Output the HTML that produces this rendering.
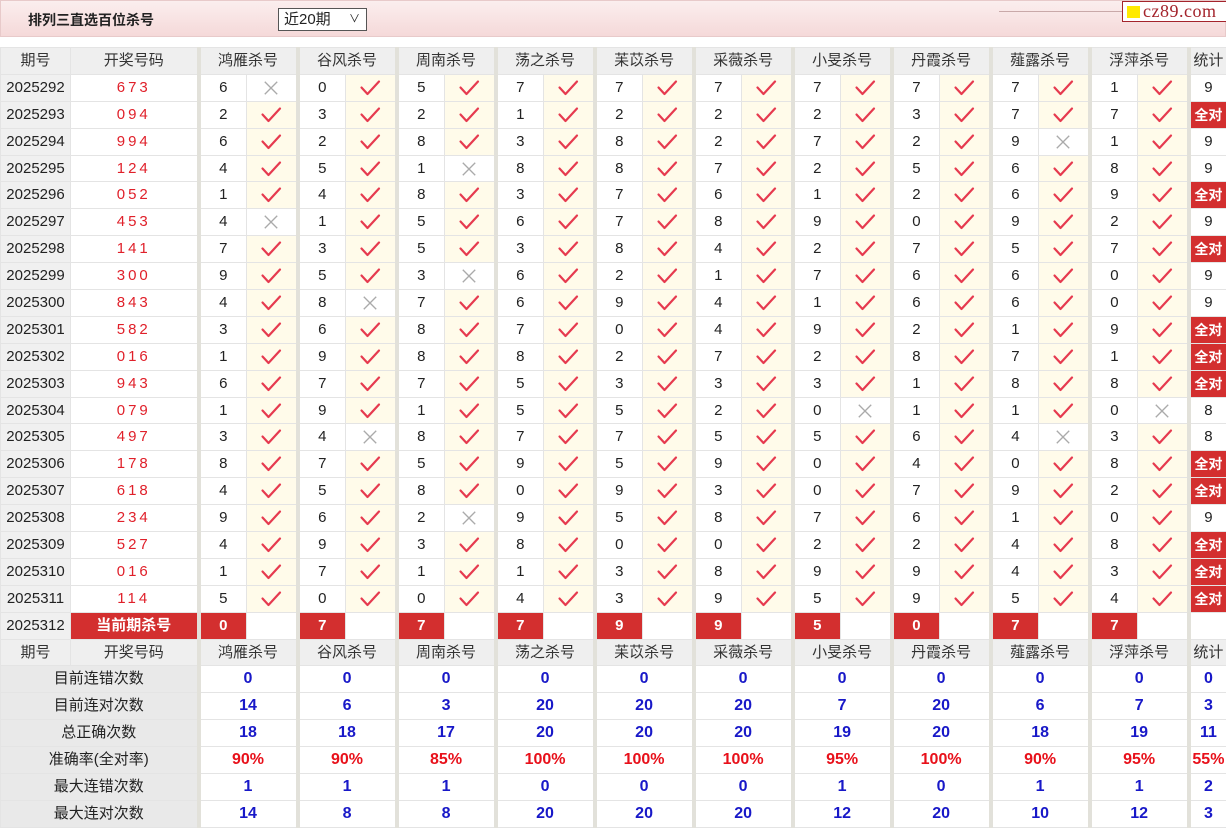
<!DOCTYPE html>
<html><head><meta charset="utf-8">
<style>
*{margin:0;padding:0;box-sizing:border-box}
body{width:1226px;height:828px;background:#fff;font-family:"Liberation Sans","Noto Sans CJK SC",sans-serif;color:#222;position:relative;overflow:hidden}
.top{position:absolute;left:0;top:0;width:1226px;height:37px;background:linear-gradient(#fbeeee,#f5d9d9);border:1px solid #e8caca}
.title{position:absolute;left:27px;top:9px;font-size:14px;font-weight:bold;color:#222}
.sel{position:absolute;left:277px;top:7px;width:89px;height:23px;border:1px solid #555;background:#fff;font-size:15px;padding-left:5px;line-height:21px}
.sel span{position:absolute;right:6px;top:0;font-size:11px}
.line{position:absolute;left:998px;top:10px;width:123px;height:1px;background:#c9a9a9}
.logo{position:absolute;left:1121px;top:0;width:105px;height:21px;border:1px solid #a4242c;background:#fff;font-family:"Liberation Serif",serif;font-size:18px;color:#a4242c;line-height:19px;padding-left:20px;letter-spacing:.5px}
.logo i{position:absolute;left:4px;top:4px;width:13px;height:12px;background:#ffea00}
table{position:absolute;top:47px;left:0;border-collapse:collapse;table-layout:fixed;width:1226px}
td{height:26.9px;border:1px solid #e4e4e4;padding:0;text-align:center;font-size:15px;line-height:24px;white-space:nowrap;overflow:hidden}
.h td{background:#efefef;color:#333}
td.q{background:#f0f0f0}
td.k{color:#e0202a;letter-spacing:3px}
td.g{border-left:4px solid #e2e1da}
td.v{background:#fffbea}
td.v svg,td.x svg{display:block;margin:0 auto}
td.r{background:#d32f2f;color:#fff;font-weight:bold}
td.a{background:#d32f2f;color:#fff;font-weight:bold;font-size:14px}
td.l{background:#e9e9e9;color:#222}
td.b{color:#1818c8;font-weight:bold;font-size:16px}
td.p{color:#e8101a;font-weight:bold;font-size:16px}
</style></head><body>
<svg width="0" height="0" style="position:absolute"><defs>
<symbol id="c" viewBox="0 0 22 18"><path d="M2.5 8.5 L8.5 15 L20 2.5" stroke="#e63a4f" stroke-width="2.2" fill="none" stroke-linecap="round" stroke-linejoin="round"/></symbol>
<symbol id="e" viewBox="0 0 18 18"><path d="M2 2 L16 16 M16 2 L2 16" stroke="#aaa" stroke-width="1.5" fill="none"/></symbol>
</defs></svg>
<div class="top"><div class="title">排列三直选百位杀号</div><div class="sel">近20期<span>&#8744;</span></div><div class="line"></div><div class="logo"><i></i>cz89.com</div></div>
<table>
<colgroup><col style="width:70px"><col style="width:128px">
<col style="width:48px"><col style="width:51px"><col style="width:48px"><col style="width:51px"><col style="width:48px"><col style="width:51px"><col style="width:48px"><col style="width:51px"><col style="width:48px"><col style="width:51px"><col style="width:48px"><col style="width:51px"><col style="width:48px"><col style="width:51px"><col style="width:48px"><col style="width:51px"><col style="width:48px"><col style="width:51px"><col style="width:48px"><col style="width:51px"><col style="width:38px"></colgroup>
<tr class="h"><td>期号</td><td>开奖号码</td><td class="g" colspan="2">鸿雁杀号</td><td class="g" colspan="2">谷风杀号</td><td class="g" colspan="2">周南杀号</td><td class="g" colspan="2">荡之杀号</td><td class="g" colspan="2">苿苡杀号</td><td class="g" colspan="2">采薇杀号</td><td class="g" colspan="2">小旻杀号</td><td class="g" colspan="2">丹霞杀号</td><td class="g" colspan="2">薤露杀号</td><td class="g" colspan="2">浮萍杀号</td><td class="g">统计</td></tr>
<tr><td class="q">2025292</td><td class="k">673</td><td class="g">6</td><td class="x"><svg width="16" height="16"><use href="#e"/></svg></td><td class="g">0</td><td class="v"><svg width="22" height="18"><use href="#c"/></svg></td><td class="g">5</td><td class="v"><svg width="22" height="18"><use href="#c"/></svg></td><td class="g">7</td><td class="v"><svg width="22" height="18"><use href="#c"/></svg></td><td class="g">7</td><td class="v"><svg width="22" height="18"><use href="#c"/></svg></td><td class="g">7</td><td class="v"><svg width="22" height="18"><use href="#c"/></svg></td><td class="g">7</td><td class="v"><svg width="22" height="18"><use href="#c"/></svg></td><td class="g">7</td><td class="v"><svg width="22" height="18"><use href="#c"/></svg></td><td class="g">7</td><td class="v"><svg width="22" height="18"><use href="#c"/></svg></td><td class="g">1</td><td class="v"><svg width="22" height="18"><use href="#c"/></svg></td><td class="g">9</td></tr>
<tr><td class="q">2025293</td><td class="k">094</td><td class="g">2</td><td class="v"><svg width="22" height="18"><use href="#c"/></svg></td><td class="g">3</td><td class="v"><svg width="22" height="18"><use href="#c"/></svg></td><td class="g">2</td><td class="v"><svg width="22" height="18"><use href="#c"/></svg></td><td class="g">1</td><td class="v"><svg width="22" height="18"><use href="#c"/></svg></td><td class="g">2</td><td class="v"><svg width="22" height="18"><use href="#c"/></svg></td><td class="g">2</td><td class="v"><svg width="22" height="18"><use href="#c"/></svg></td><td class="g">2</td><td class="v"><svg width="22" height="18"><use href="#c"/></svg></td><td class="g">3</td><td class="v"><svg width="22" height="18"><use href="#c"/></svg></td><td class="g">7</td><td class="v"><svg width="22" height="18"><use href="#c"/></svg></td><td class="g">7</td><td class="v"><svg width="22" height="18"><use href="#c"/></svg></td><td class="g a">全对</td></tr>
<tr><td class="q">2025294</td><td class="k">994</td><td class="g">6</td><td class="v"><svg width="22" height="18"><use href="#c"/></svg></td><td class="g">2</td><td class="v"><svg width="22" height="18"><use href="#c"/></svg></td><td class="g">8</td><td class="v"><svg width="22" height="18"><use href="#c"/></svg></td><td class="g">3</td><td class="v"><svg width="22" height="18"><use href="#c"/></svg></td><td class="g">8</td><td class="v"><svg width="22" height="18"><use href="#c"/></svg></td><td class="g">2</td><td class="v"><svg width="22" height="18"><use href="#c"/></svg></td><td class="g">7</td><td class="v"><svg width="22" height="18"><use href="#c"/></svg></td><td class="g">2</td><td class="v"><svg width="22" height="18"><use href="#c"/></svg></td><td class="g">9</td><td class="x"><svg width="16" height="16"><use href="#e"/></svg></td><td class="g">1</td><td class="v"><svg width="22" height="18"><use href="#c"/></svg></td><td class="g">9</td></tr>
<tr><td class="q">2025295</td><td class="k">124</td><td class="g">4</td><td class="v"><svg width="22" height="18"><use href="#c"/></svg></td><td class="g">5</td><td class="v"><svg width="22" height="18"><use href="#c"/></svg></td><td class="g">1</td><td class="x"><svg width="16" height="16"><use href="#e"/></svg></td><td class="g">8</td><td class="v"><svg width="22" height="18"><use href="#c"/></svg></td><td class="g">8</td><td class="v"><svg width="22" height="18"><use href="#c"/></svg></td><td class="g">7</td><td class="v"><svg width="22" height="18"><use href="#c"/></svg></td><td class="g">2</td><td class="v"><svg width="22" height="18"><use href="#c"/></svg></td><td class="g">5</td><td class="v"><svg width="22" height="18"><use href="#c"/></svg></td><td class="g">6</td><td class="v"><svg width="22" height="18"><use href="#c"/></svg></td><td class="g">8</td><td class="v"><svg width="22" height="18"><use href="#c"/></svg></td><td class="g">9</td></tr>
<tr><td class="q">2025296</td><td class="k">052</td><td class="g">1</td><td class="v"><svg width="22" height="18"><use href="#c"/></svg></td><td class="g">4</td><td class="v"><svg width="22" height="18"><use href="#c"/></svg></td><td class="g">8</td><td class="v"><svg width="22" height="18"><use href="#c"/></svg></td><td class="g">3</td><td class="v"><svg width="22" height="18"><use href="#c"/></svg></td><td class="g">7</td><td class="v"><svg width="22" height="18"><use href="#c"/></svg></td><td class="g">6</td><td class="v"><svg width="22" height="18"><use href="#c"/></svg></td><td class="g">1</td><td class="v"><svg width="22" height="18"><use href="#c"/></svg></td><td class="g">2</td><td class="v"><svg width="22" height="18"><use href="#c"/></svg></td><td class="g">6</td><td class="v"><svg width="22" height="18"><use href="#c"/></svg></td><td class="g">9</td><td class="v"><svg width="22" height="18"><use href="#c"/></svg></td><td class="g a">全对</td></tr>
<tr><td class="q">2025297</td><td class="k">453</td><td class="g">4</td><td class="x"><svg width="16" height="16"><use href="#e"/></svg></td><td class="g">1</td><td class="v"><svg width="22" height="18"><use href="#c"/></svg></td><td class="g">5</td><td class="v"><svg width="22" height="18"><use href="#c"/></svg></td><td class="g">6</td><td class="v"><svg width="22" height="18"><use href="#c"/></svg></td><td class="g">7</td><td class="v"><svg width="22" height="18"><use href="#c"/></svg></td><td class="g">8</td><td class="v"><svg width="22" height="18"><use href="#c"/></svg></td><td class="g">9</td><td class="v"><svg width="22" height="18"><use href="#c"/></svg></td><td class="g">0</td><td class="v"><svg width="22" height="18"><use href="#c"/></svg></td><td class="g">9</td><td class="v"><svg width="22" height="18"><use href="#c"/></svg></td><td class="g">2</td><td class="v"><svg width="22" height="18"><use href="#c"/></svg></td><td class="g">9</td></tr>
<tr><td class="q">2025298</td><td class="k">141</td><td class="g">7</td><td class="v"><svg width="22" height="18"><use href="#c"/></svg></td><td class="g">3</td><td class="v"><svg width="22" height="18"><use href="#c"/></svg></td><td class="g">5</td><td class="v"><svg width="22" height="18"><use href="#c"/></svg></td><td class="g">3</td><td class="v"><svg width="22" height="18"><use href="#c"/></svg></td><td class="g">8</td><td class="v"><svg width="22" height="18"><use href="#c"/></svg></td><td class="g">4</td><td class="v"><svg width="22" height="18"><use href="#c"/></svg></td><td class="g">2</td><td class="v"><svg width="22" height="18"><use href="#c"/></svg></td><td class="g">7</td><td class="v"><svg width="22" height="18"><use href="#c"/></svg></td><td class="g">5</td><td class="v"><svg width="22" height="18"><use href="#c"/></svg></td><td class="g">7</td><td class="v"><svg width="22" height="18"><use href="#c"/></svg></td><td class="g a">全对</td></tr>
<tr><td class="q">2025299</td><td class="k">300</td><td class="g">9</td><td class="v"><svg width="22" height="18"><use href="#c"/></svg></td><td class="g">5</td><td class="v"><svg width="22" height="18"><use href="#c"/></svg></td><td class="g">3</td><td class="x"><svg width="16" height="16"><use href="#e"/></svg></td><td class="g">6</td><td class="v"><svg width="22" height="18"><use href="#c"/></svg></td><td class="g">2</td><td class="v"><svg width="22" height="18"><use href="#c"/></svg></td><td class="g">1</td><td class="v"><svg width="22" height="18"><use href="#c"/></svg></td><td class="g">7</td><td class="v"><svg width="22" height="18"><use href="#c"/></svg></td><td class="g">6</td><td class="v"><svg width="22" height="18"><use href="#c"/></svg></td><td class="g">6</td><td class="v"><svg width="22" height="18"><use href="#c"/></svg></td><td class="g">0</td><td class="v"><svg width="22" height="18"><use href="#c"/></svg></td><td class="g">9</td></tr>
<tr><td class="q">2025300</td><td class="k">843</td><td class="g">4</td><td class="v"><svg width="22" height="18"><use href="#c"/></svg></td><td class="g">8</td><td class="x"><svg width="16" height="16"><use href="#e"/></svg></td><td class="g">7</td><td class="v"><svg width="22" height="18"><use href="#c"/></svg></td><td class="g">6</td><td class="v"><svg width="22" height="18"><use href="#c"/></svg></td><td class="g">9</td><td class="v"><svg width="22" height="18"><use href="#c"/></svg></td><td class="g">4</td><td class="v"><svg width="22" height="18"><use href="#c"/></svg></td><td class="g">1</td><td class="v"><svg width="22" height="18"><use href="#c"/></svg></td><td class="g">6</td><td class="v"><svg width="22" height="18"><use href="#c"/></svg></td><td class="g">6</td><td class="v"><svg width="22" height="18"><use href="#c"/></svg></td><td class="g">0</td><td class="v"><svg width="22" height="18"><use href="#c"/></svg></td><td class="g">9</td></tr>
<tr><td class="q">2025301</td><td class="k">582</td><td class="g">3</td><td class="v"><svg width="22" height="18"><use href="#c"/></svg></td><td class="g">6</td><td class="v"><svg width="22" height="18"><use href="#c"/></svg></td><td class="g">8</td><td class="v"><svg width="22" height="18"><use href="#c"/></svg></td><td class="g">7</td><td class="v"><svg width="22" height="18"><use href="#c"/></svg></td><td class="g">0</td><td class="v"><svg width="22" height="18"><use href="#c"/></svg></td><td class="g">4</td><td class="v"><svg width="22" height="18"><use href="#c"/></svg></td><td class="g">9</td><td class="v"><svg width="22" height="18"><use href="#c"/></svg></td><td class="g">2</td><td class="v"><svg width="22" height="18"><use href="#c"/></svg></td><td class="g">1</td><td class="v"><svg width="22" height="18"><use href="#c"/></svg></td><td class="g">9</td><td class="v"><svg width="22" height="18"><use href="#c"/></svg></td><td class="g a">全对</td></tr>
<tr><td class="q">2025302</td><td class="k">016</td><td class="g">1</td><td class="v"><svg width="22" height="18"><use href="#c"/></svg></td><td class="g">9</td><td class="v"><svg width="22" height="18"><use href="#c"/></svg></td><td class="g">8</td><td class="v"><svg width="22" height="18"><use href="#c"/></svg></td><td class="g">8</td><td class="v"><svg width="22" height="18"><use href="#c"/></svg></td><td class="g">2</td><td class="v"><svg width="22" height="18"><use href="#c"/></svg></td><td class="g">7</td><td class="v"><svg width="22" height="18"><use href="#c"/></svg></td><td class="g">2</td><td class="v"><svg width="22" height="18"><use href="#c"/></svg></td><td class="g">8</td><td class="v"><svg width="22" height="18"><use href="#c"/></svg></td><td class="g">7</td><td class="v"><svg width="22" height="18"><use href="#c"/></svg></td><td class="g">1</td><td class="v"><svg width="22" height="18"><use href="#c"/></svg></td><td class="g a">全对</td></tr>
<tr><td class="q">2025303</td><td class="k">943</td><td class="g">6</td><td class="v"><svg width="22" height="18"><use href="#c"/></svg></td><td class="g">7</td><td class="v"><svg width="22" height="18"><use href="#c"/></svg></td><td class="g">7</td><td class="v"><svg width="22" height="18"><use href="#c"/></svg></td><td class="g">5</td><td class="v"><svg width="22" height="18"><use href="#c"/></svg></td><td class="g">3</td><td class="v"><svg width="22" height="18"><use href="#c"/></svg></td><td class="g">3</td><td class="v"><svg width="22" height="18"><use href="#c"/></svg></td><td class="g">3</td><td class="v"><svg width="22" height="18"><use href="#c"/></svg></td><td class="g">1</td><td class="v"><svg width="22" height="18"><use href="#c"/></svg></td><td class="g">8</td><td class="v"><svg width="22" height="18"><use href="#c"/></svg></td><td class="g">8</td><td class="v"><svg width="22" height="18"><use href="#c"/></svg></td><td class="g a">全对</td></tr>
<tr><td class="q">2025304</td><td class="k">079</td><td class="g">1</td><td class="v"><svg width="22" height="18"><use href="#c"/></svg></td><td class="g">9</td><td class="v"><svg width="22" height="18"><use href="#c"/></svg></td><td class="g">1</td><td class="v"><svg width="22" height="18"><use href="#c"/></svg></td><td class="g">5</td><td class="v"><svg width="22" height="18"><use href="#c"/></svg></td><td class="g">5</td><td class="v"><svg width="22" height="18"><use href="#c"/></svg></td><td class="g">2</td><td class="v"><svg width="22" height="18"><use href="#c"/></svg></td><td class="g">0</td><td class="x"><svg width="16" height="16"><use href="#e"/></svg></td><td class="g">1</td><td class="v"><svg width="22" height="18"><use href="#c"/></svg></td><td class="g">1</td><td class="v"><svg width="22" height="18"><use href="#c"/></svg></td><td class="g">0</td><td class="x"><svg width="16" height="16"><use href="#e"/></svg></td><td class="g">8</td></tr>
<tr><td class="q">2025305</td><td class="k">497</td><td class="g">3</td><td class="v"><svg width="22" height="18"><use href="#c"/></svg></td><td class="g">4</td><td class="x"><svg width="16" height="16"><use href="#e"/></svg></td><td class="g">8</td><td class="v"><svg width="22" height="18"><use href="#c"/></svg></td><td class="g">7</td><td class="v"><svg width="22" height="18"><use href="#c"/></svg></td><td class="g">7</td><td class="v"><svg width="22" height="18"><use href="#c"/></svg></td><td class="g">5</td><td class="v"><svg width="22" height="18"><use href="#c"/></svg></td><td class="g">5</td><td class="v"><svg width="22" height="18"><use href="#c"/></svg></td><td class="g">6</td><td class="v"><svg width="22" height="18"><use href="#c"/></svg></td><td class="g">4</td><td class="x"><svg width="16" height="16"><use href="#e"/></svg></td><td class="g">3</td><td class="v"><svg width="22" height="18"><use href="#c"/></svg></td><td class="g">8</td></tr>
<tr><td class="q">2025306</td><td class="k">178</td><td class="g">8</td><td class="v"><svg width="22" height="18"><use href="#c"/></svg></td><td class="g">7</td><td class="v"><svg width="22" height="18"><use href="#c"/></svg></td><td class="g">5</td><td class="v"><svg width="22" height="18"><use href="#c"/></svg></td><td class="g">9</td><td class="v"><svg width="22" height="18"><use href="#c"/></svg></td><td class="g">5</td><td class="v"><svg width="22" height="18"><use href="#c"/></svg></td><td class="g">9</td><td class="v"><svg width="22" height="18"><use href="#c"/></svg></td><td class="g">0</td><td class="v"><svg width="22" height="18"><use href="#c"/></svg></td><td class="g">4</td><td class="v"><svg width="22" height="18"><use href="#c"/></svg></td><td class="g">0</td><td class="v"><svg width="22" height="18"><use href="#c"/></svg></td><td class="g">8</td><td class="v"><svg width="22" height="18"><use href="#c"/></svg></td><td class="g a">全对</td></tr>
<tr><td class="q">2025307</td><td class="k">618</td><td class="g">4</td><td class="v"><svg width="22" height="18"><use href="#c"/></svg></td><td class="g">5</td><td class="v"><svg width="22" height="18"><use href="#c"/></svg></td><td class="g">8</td><td class="v"><svg width="22" height="18"><use href="#c"/></svg></td><td class="g">0</td><td class="v"><svg width="22" height="18"><use href="#c"/></svg></td><td class="g">9</td><td class="v"><svg width="22" height="18"><use href="#c"/></svg></td><td class="g">3</td><td class="v"><svg width="22" height="18"><use href="#c"/></svg></td><td class="g">0</td><td class="v"><svg width="22" height="18"><use href="#c"/></svg></td><td class="g">7</td><td class="v"><svg width="22" height="18"><use href="#c"/></svg></td><td class="g">9</td><td class="v"><svg width="22" height="18"><use href="#c"/></svg></td><td class="g">2</td><td class="v"><svg width="22" height="18"><use href="#c"/></svg></td><td class="g a">全对</td></tr>
<tr><td class="q">2025308</td><td class="k">234</td><td class="g">9</td><td class="v"><svg width="22" height="18"><use href="#c"/></svg></td><td class="g">6</td><td class="v"><svg width="22" height="18"><use href="#c"/></svg></td><td class="g">2</td><td class="x"><svg width="16" height="16"><use href="#e"/></svg></td><td class="g">9</td><td class="v"><svg width="22" height="18"><use href="#c"/></svg></td><td class="g">5</td><td class="v"><svg width="22" height="18"><use href="#c"/></svg></td><td class="g">8</td><td class="v"><svg width="22" height="18"><use href="#c"/></svg></td><td class="g">7</td><td class="v"><svg width="22" height="18"><use href="#c"/></svg></td><td class="g">6</td><td class="v"><svg width="22" height="18"><use href="#c"/></svg></td><td class="g">1</td><td class="v"><svg width="22" height="18"><use href="#c"/></svg></td><td class="g">0</td><td class="v"><svg width="22" height="18"><use href="#c"/></svg></td><td class="g">9</td></tr>
<tr><td class="q">2025309</td><td class="k">527</td><td class="g">4</td><td class="v"><svg width="22" height="18"><use href="#c"/></svg></td><td class="g">9</td><td class="v"><svg width="22" height="18"><use href="#c"/></svg></td><td class="g">3</td><td class="v"><svg width="22" height="18"><use href="#c"/></svg></td><td class="g">8</td><td class="v"><svg width="22" height="18"><use href="#c"/></svg></td><td class="g">0</td><td class="v"><svg width="22" height="18"><use href="#c"/></svg></td><td class="g">0</td><td class="v"><svg width="22" height="18"><use href="#c"/></svg></td><td class="g">2</td><td class="v"><svg width="22" height="18"><use href="#c"/></svg></td><td class="g">2</td><td class="v"><svg width="22" height="18"><use href="#c"/></svg></td><td class="g">4</td><td class="v"><svg width="22" height="18"><use href="#c"/></svg></td><td class="g">8</td><td class="v"><svg width="22" height="18"><use href="#c"/></svg></td><td class="g a">全对</td></tr>
<tr><td class="q">2025310</td><td class="k">016</td><td class="g">1</td><td class="v"><svg width="22" height="18"><use href="#c"/></svg></td><td class="g">7</td><td class="v"><svg width="22" height="18"><use href="#c"/></svg></td><td class="g">1</td><td class="v"><svg width="22" height="18"><use href="#c"/></svg></td><td class="g">1</td><td class="v"><svg width="22" height="18"><use href="#c"/></svg></td><td class="g">3</td><td class="v"><svg width="22" height="18"><use href="#c"/></svg></td><td class="g">8</td><td class="v"><svg width="22" height="18"><use href="#c"/></svg></td><td class="g">9</td><td class="v"><svg width="22" height="18"><use href="#c"/></svg></td><td class="g">9</td><td class="v"><svg width="22" height="18"><use href="#c"/></svg></td><td class="g">4</td><td class="v"><svg width="22" height="18"><use href="#c"/></svg></td><td class="g">3</td><td class="v"><svg width="22" height="18"><use href="#c"/></svg></td><td class="g a">全对</td></tr>
<tr><td class="q">2025311</td><td class="k">114</td><td class="g">5</td><td class="v"><svg width="22" height="18"><use href="#c"/></svg></td><td class="g">0</td><td class="v"><svg width="22" height="18"><use href="#c"/></svg></td><td class="g">0</td><td class="v"><svg width="22" height="18"><use href="#c"/></svg></td><td class="g">4</td><td class="v"><svg width="22" height="18"><use href="#c"/></svg></td><td class="g">3</td><td class="v"><svg width="22" height="18"><use href="#c"/></svg></td><td class="g">9</td><td class="v"><svg width="22" height="18"><use href="#c"/></svg></td><td class="g">5</td><td class="v"><svg width="22" height="18"><use href="#c"/></svg></td><td class="g">9</td><td class="v"><svg width="22" height="18"><use href="#c"/></svg></td><td class="g">5</td><td class="v"><svg width="22" height="18"><use href="#c"/></svg></td><td class="g">4</td><td class="v"><svg width="22" height="18"><use href="#c"/></svg></td><td class="g a">全对</td></tr>
<tr><td class="q">2025312</td><td class="r">当前期杀号</td><td class="g r">0</td><td></td><td class="g r">7</td><td></td><td class="g r">7</td><td></td><td class="g r">7</td><td></td><td class="g r">9</td><td></td><td class="g r">9</td><td></td><td class="g r">5</td><td></td><td class="g r">0</td><td></td><td class="g r">7</td><td></td><td class="g r">7</td><td></td><td class="g"></td></tr>
<tr class="h"><td>期号</td><td>开奖号码</td><td class="g" colspan="2">鸿雁杀号</td><td class="g" colspan="2">谷风杀号</td><td class="g" colspan="2">周南杀号</td><td class="g" colspan="2">荡之杀号</td><td class="g" colspan="2">苿苡杀号</td><td class="g" colspan="2">采薇杀号</td><td class="g" colspan="2">小旻杀号</td><td class="g" colspan="2">丹霞杀号</td><td class="g" colspan="2">薤露杀号</td><td class="g" colspan="2">浮萍杀号</td><td class="g">统计</td></tr>
<tr><td class="l" colspan="2">目前连错次数</td><td class="g b" colspan="2">0</td><td class="g b" colspan="2">0</td><td class="g b" colspan="2">0</td><td class="g b" colspan="2">0</td><td class="g b" colspan="2">0</td><td class="g b" colspan="2">0</td><td class="g b" colspan="2">0</td><td class="g b" colspan="2">0</td><td class="g b" colspan="2">0</td><td class="g b" colspan="2">0</td><td class="g b">0</td></tr>
<tr><td class="l" colspan="2">目前连对次数</td><td class="g b" colspan="2">14</td><td class="g b" colspan="2">6</td><td class="g b" colspan="2">3</td><td class="g b" colspan="2">20</td><td class="g b" colspan="2">20</td><td class="g b" colspan="2">20</td><td class="g b" colspan="2">7</td><td class="g b" colspan="2">20</td><td class="g b" colspan="2">6</td><td class="g b" colspan="2">7</td><td class="g b">3</td></tr>
<tr><td class="l" colspan="2">总正确次数</td><td class="g b" colspan="2">18</td><td class="g b" colspan="2">18</td><td class="g b" colspan="2">17</td><td class="g b" colspan="2">20</td><td class="g b" colspan="2">20</td><td class="g b" colspan="2">20</td><td class="g b" colspan="2">19</td><td class="g b" colspan="2">20</td><td class="g b" colspan="2">18</td><td class="g b" colspan="2">19</td><td class="g b">11</td></tr>
<tr><td class="l" colspan="2">准确率(全对率)</td><td class="g p" colspan="2">90%</td><td class="g p" colspan="2">90%</td><td class="g p" colspan="2">85%</td><td class="g p" colspan="2">100%</td><td class="g p" colspan="2">100%</td><td class="g p" colspan="2">100%</td><td class="g p" colspan="2">95%</td><td class="g p" colspan="2">100%</td><td class="g p" colspan="2">90%</td><td class="g p" colspan="2">95%</td><td class="g p">55%</td></tr>
<tr><td class="l" colspan="2">最大连错次数</td><td class="g b" colspan="2">1</td><td class="g b" colspan="2">1</td><td class="g b" colspan="2">1</td><td class="g b" colspan="2">0</td><td class="g b" colspan="2">0</td><td class="g b" colspan="2">0</td><td class="g b" colspan="2">1</td><td class="g b" colspan="2">0</td><td class="g b" colspan="2">1</td><td class="g b" colspan="2">1</td><td class="g b">2</td></tr>
<tr><td class="l" colspan="2">最大连对次数</td><td class="g b" colspan="2">14</td><td class="g b" colspan="2">8</td><td class="g b" colspan="2">8</td><td class="g b" colspan="2">20</td><td class="g b" colspan="2">20</td><td class="g b" colspan="2">20</td><td class="g b" colspan="2">12</td><td class="g b" colspan="2">20</td><td class="g b" colspan="2">10</td><td class="g b" colspan="2">12</td><td class="g b">3</td></tr>
</table>
</body></html>
